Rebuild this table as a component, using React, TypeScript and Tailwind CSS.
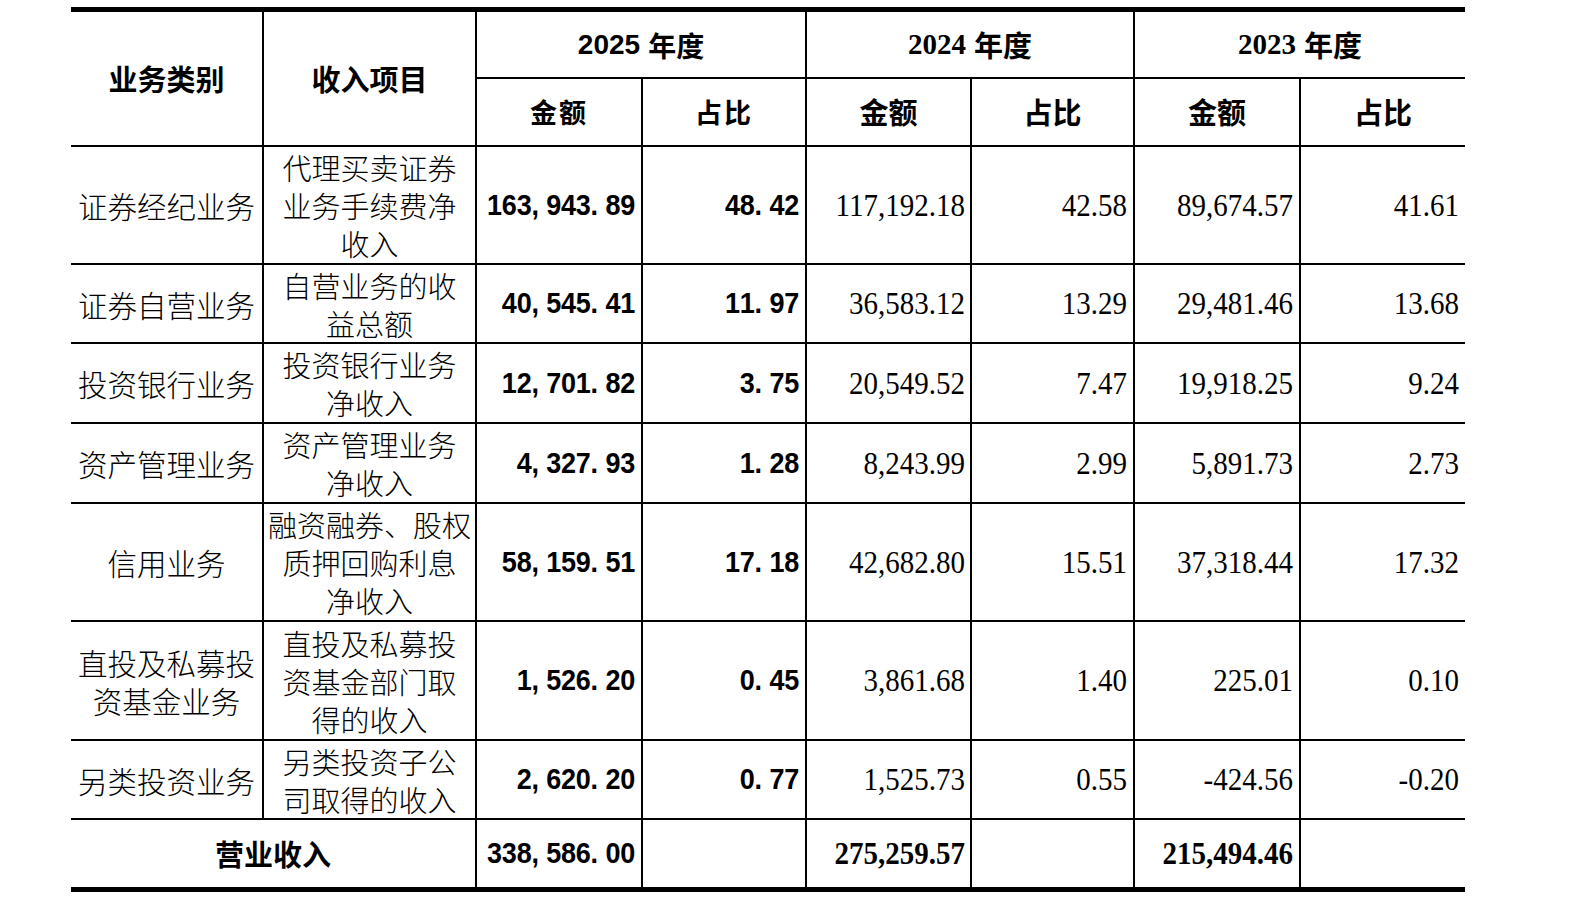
import React from "react";

type Row = {
  cat: string[];
  item: string[];
  a: string;
  ap: string;
  b: string;
  bp: string;
  c: string;
  cp: string;
};

const rows: Row[] = [
  { cat: ["证券经纪业务"], item: ["代理买卖证券", "业务手续费净", "收入"], a: "163,943.89", ap: "48.42", b: "117,192.18", bp: "42.58", c: "89,674.57", cp: "41.61" },
  { cat: ["证券自营业务"], item: ["自营业务的收", "益总额"], a: "40,545.41", ap: "11.97", b: "36,583.12", bp: "13.29", c: "29,481.46", cp: "13.68" },
  { cat: ["投资银行业务"], item: ["投资银行业务", "净收入"], a: "12,701.82", ap: "3.75", b: "20,549.52", bp: "7.47", c: "19,918.25", cp: "9.24" },
  { cat: ["资产管理业务"], item: ["资产管理业务", "净收入"], a: "4,327.93", ap: "1.28", b: "8,243.99", bp: "2.99", c: "5,891.73", cp: "2.73" },
  { cat: ["信用业务"], item: ["融资融券、股权", "质押回购利息", "净收入"], a: "58,159.51", ap: "17.18", b: "42,682.80", bp: "15.51", c: "37,318.44", cp: "17.32" },
  { cat: ["直投及私募投", "资基金业务"], item: ["直投及私募投", "资基金部门取", "得的收入"], a: "1,526.20", ap: "0.45", b: "3,861.68", bp: "1.40", c: "225.01", cp: "0.10" },
  { cat: ["另类投资业务"], item: ["另类投资子公", "司取得的收入"], a: "2,620.20", ap: "0.77", b: "1,525.73", bp: "0.55", c: "-424.56", cp: "-0.20" },
];

const CJK = "font-['Noto_Sans_CJK_SC',sans-serif]";
const SERIF = "font-['Liberation_Serif','Noto_Sans_CJK_SC',serif]";
const SANSNUM = "font-['Liberation_Sans',sans-serif]";

function Mono({ s }: { s: string }) {
  return (
    <span className={`inline-flex scale-y-[1.08] ${SANSNUM} font-bold text-[27px] leading-none`}>
      {s.split("").map((ch, i) => (
        <span
          key={i}
          className={/[0-9]/.test(ch) ? "inline-block w-[14.8px] text-center" : "inline-block w-[14.8px] text-left"}
        >
          {ch}
        </span>
      ))}
    </span>
  );
}

function Lines({ lines, className }: { lines: string[]; className?: string }) {
  return (
    <div className={`flex flex-col items-center leading-[38px] whitespace-nowrap ${className ?? ""}`}>
      {lines.map((l, i) => (
        <span key={i}>{l}</span>
      ))}
    </div>
  );
}

function Cell({ children, className }: { children?: React.ReactNode; className?: string }) {
  return <div className={`bg-white flex items-center ${className ?? ""}`}>{children}</div>;
}

function SerifNum({ s, bold }: { s: string; bold?: boolean }) {
  return (
    <span
      className={`inline-block scale-y-[1.1] ${SERIF} text-[29px] leading-none ${bold ? "font-bold" : "font-normal"}`}
    >
      {s}
    </span>
  );
}

export default function App() {
  return (
    <div className="w-[1580px] h-[898px] bg-white pt-[7px] pl-[71px] text-black">
      <div className="w-[1394px] border-y-[5px] border-black bg-black grid gap-[2px] grid-cols-[191px_211px_164px_162px_163px_161px_164px_164px] grid-rows-[65px_66px_116px_77px_78px_78px_116px_117px_77px_67px]">
        {/* header row 1 */}
        <Cell className={`row-span-2 justify-center ${CJK} font-bold text-[29px]`}>业务类别</Cell>
        <Cell className={`row-span-2 justify-center ${CJK} font-bold text-[29px]`}>收入项目</Cell>
        <Cell className="col-span-2 justify-center">
          <span className={`${SANSNUM} font-bold text-[28px]`}>2025</span>
          <span className={`${CJK} font-bold text-[28px] ml-[8px]`}>年度</span>
        </Cell>
        <Cell className="col-span-2 justify-center">
          <span className={`${SERIF} font-bold text-[29px]`}>2024</span>
          <span className={`${CJK} font-bold text-[29px] ml-[8px]`}>年度</span>
        </Cell>
        <Cell className="col-span-2 justify-center">
          <span className={`${SERIF} font-bold text-[29px]`}>2023</span>
          <span className={`${CJK} font-bold text-[29px] ml-[8px]`}>年度</span>
        </Cell>
        {/* header row 2 */}
        <Cell className={`justify-center ${CJK} font-bold text-[27px] tracking-[2px]`}>金额</Cell>
        <Cell className={`justify-center ${CJK} font-bold text-[27px] tracking-[2px]`}>占比</Cell>
        <Cell className={`justify-center ${CJK} font-bold text-[29px]`}>金额</Cell>
        <Cell className={`justify-center ${CJK} font-bold text-[29px]`}>占比</Cell>
        <Cell className={`justify-center ${CJK} font-bold text-[29px]`}>金额</Cell>
        <Cell className={`justify-center ${CJK} font-bold text-[29px]`}>占比</Cell>

        {rows.map((r, i) => (
          <React.Fragment key={i}>
            <Cell className={`justify-center ${CJK} font-light text-[29.5px]`}>
              <Lines lines={r.cat} />
            </Cell>
            <Cell className={`justify-center ${CJK} font-light text-[29px]`}>
              <Lines lines={r.item} />
            </Cell>
            <Cell className="justify-end pr-[6px]">
              <Mono s={r.a} />
            </Cell>
            <Cell className="justify-end pr-[6px]">
              <Mono s={r.ap} />
            </Cell>
            <Cell className="justify-end pr-[5px]">
              <SerifNum s={r.b} />
            </Cell>
            <Cell className="justify-end pr-[6px]">
              <SerifNum s={r.bp} />
            </Cell>
            <Cell className="justify-end pr-[6px]">
              <SerifNum s={r.c} />
            </Cell>
            <Cell className="justify-end pr-[6px]">
              <SerifNum s={r.cp} />
            </Cell>
          </React.Fragment>
        ))}

        {/* total row */}
        <Cell className={`col-span-2 justify-center ${CJK} font-bold text-[29px]`}>营业收入</Cell>
        <Cell className="justify-end pr-[6px]">
          <Mono s="338,586.00" />
        </Cell>
        <Cell />
        <Cell className="justify-end pr-[5px]">
          <SerifNum s="275,259.57" bold />
        </Cell>
        <Cell />
        <Cell className="justify-end pr-[6px]">
          <SerifNum s="215,494.46" bold />
        </Cell>
        <Cell />
      </div>
    </div>
  );
}
